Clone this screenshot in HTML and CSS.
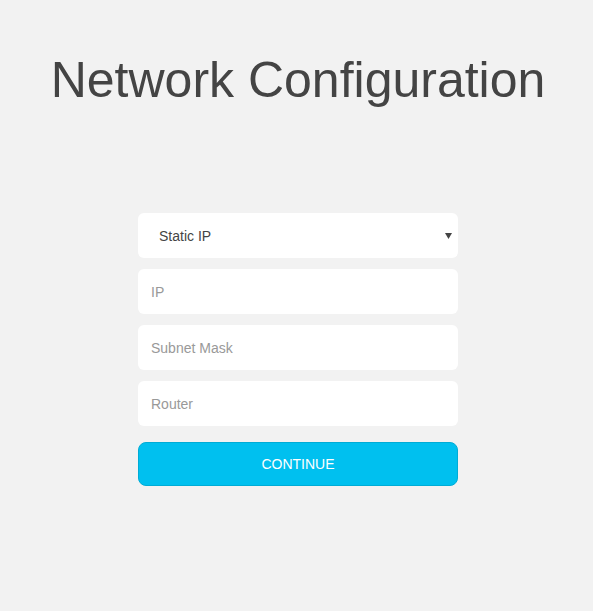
FILE: index.html
```html
<!DOCTYPE html>
<html lang="en">
<head>
<meta charset="utf-8">
<title>Network Configuration</title>
<link rel="stylesheet" href="styles.css">
</head>
<body>
<main class="page">
  <h1 class="title">Network Configuration</h1>
  <form class="form">
    <div class="select-wrap">
      <select class="field select">
        <option>Static IP</option>
        <option>DHCP</option>
      </select>
      <svg class="caret" width="7" height="6" viewBox="0 0 7 6"><path d="M0 0H7L3.5 6Z" fill="#444"/></svg>
    </div>
    <input class="field" type="text" placeholder="IP">
    <input class="field" type="text" placeholder="Subnet Mask">
    <input class="field" type="text" placeholder="Router">
    <button class="btn" type="button">CONTINUE</button>
  </form>
</main>
</body>
</html>
```
FILE: styles.css
```css
html, body {
  margin: 0;
  padding: 0;
  background: #f2f2f2;
  font-family: "Liberation Sans", Arial, sans-serif;
}
.page {
  display: flex;
  flex-direction: column;
  align-items: center;
  padding-top: 50px;
}
.title {
  margin: 0;
  font-size: 50px;
  font-weight: normal;
  line-height: 60px;
  color: #444;
  padding-left: 3px;
}
.form {
  margin-top: 103px;
  margin-left: 3px;
  width: 320px;
  display: flex;
  flex-direction: column;
  gap: 11px;
}
.select-wrap {
  position: relative;
}
.field {
  box-sizing: border-box;
  width: 100%;
  height: 45px;
  border: none;
  border-radius: 6px;
  background: #fff;
  padding: 0 12px 0 13px;
  font-family: "Liberation Sans", Arial, sans-serif;
  font-size: 14px;
  color: #444;
  outline: none;
  display: block;
}
.field::placeholder {
  color: #999;
}
.select {
  appearance: none;
  -webkit-appearance: none;
  padding-left: 21px;
}
.caret {
  position: absolute;
  right: 6px;
  top: 20px;
  pointer-events: none;
}
.btn {
  margin-top: 5px;
  height: 44px;
  border: 1px solid #00acd6;
  border-radius: 8px;
  background: #00c0ef;
  color: #fff;
  font-family: "Liberation Sans", Arial, sans-serif;
  font-size: 14px;
  cursor: pointer;
}
```
